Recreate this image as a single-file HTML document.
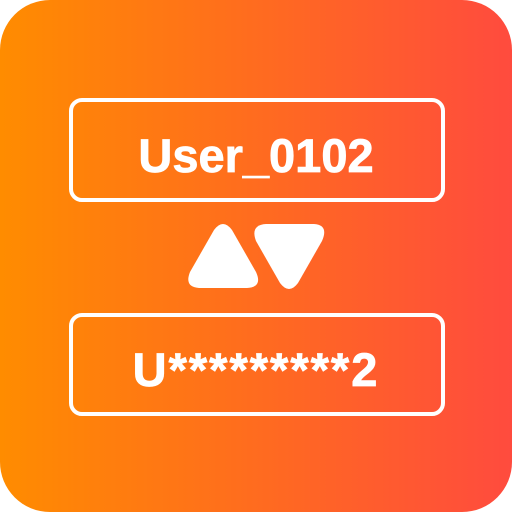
<!DOCTYPE html>
<html><head><style>
html,body{margin:0;padding:0;width:512px;height:512px;background:#fff;overflow:hidden}
.bg{position:absolute;left:0;top:0;width:512px;height:512px;border-radius:50px;background:linear-gradient(90deg,#ff8c00,#ff4b3e)}
.box{position:absolute;left:69px;width:368px;border:4px solid #fff;border-radius:13px;box-sizing:content-box}
.t{position:absolute;left:0;width:512px;text-align:center;color:#fff;font-family:"Liberation Sans",sans-serif;font-weight:bold;font-size:47px;line-height:1;-webkit-text-stroke:0.8px #fff}
</style></head><body>
<div class="bg"></div>
<div class="box" style="top:98px;height:96px"></div>
<div class="box" style="top:313px;height:95px"></div>
<div class="t" style="top:132px">User_0102</div>
<div class="t" style="top:346px;letter-spacing:2px">U*********2</div>
<svg style="position:absolute;left:0;top:0" width="512" height="512">
<path d="M214 230 Q223 218 232 230 L256 272 Q263 287 247 288 L199 288 Q184 287 190 272 Z" fill="#fff"/>
<path d="M266 224 L314 224 Q329 225 322 241 L298 283 Q289 295 280 283 L256 241 Q250 225 266 224 Z" fill="#fff"/>
</svg>
</body></html>
